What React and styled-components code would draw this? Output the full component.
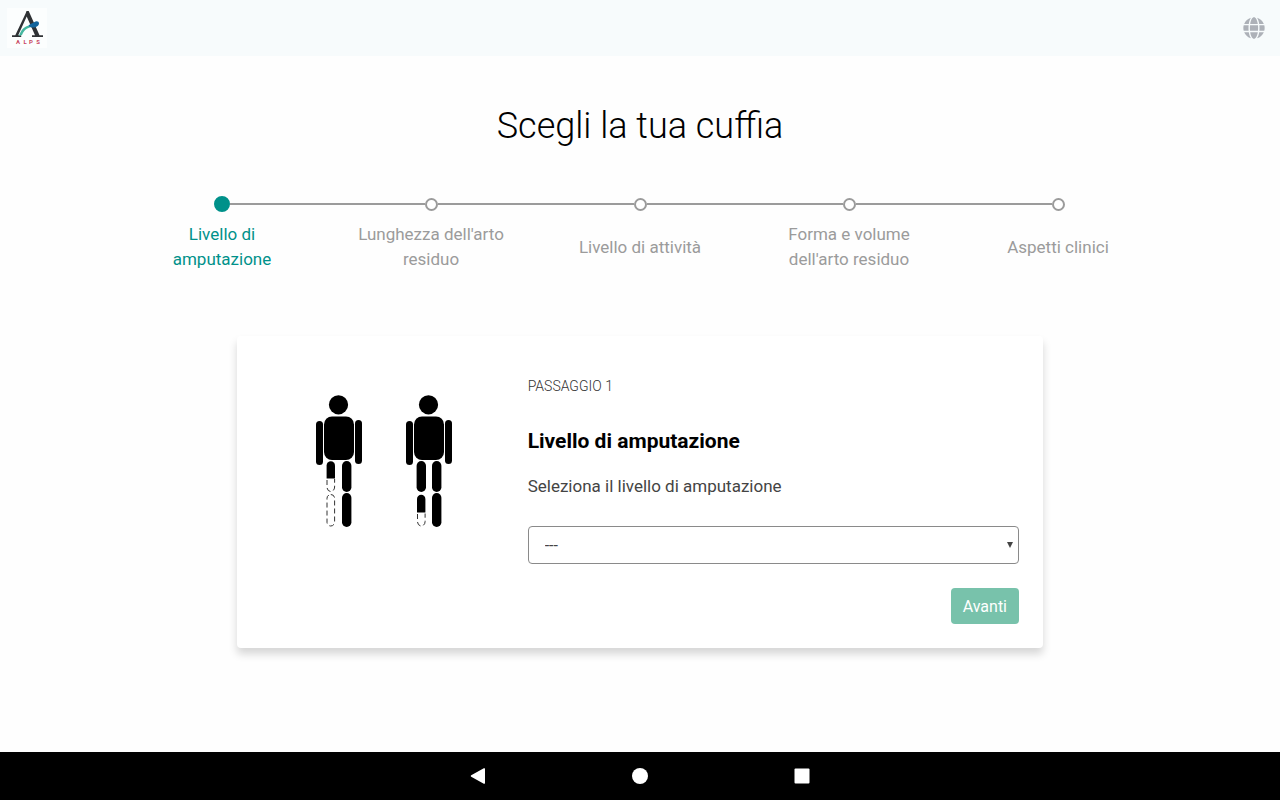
import React, { useState } from 'react';
import styled, { createGlobalStyle } from 'styled-components';
import { FaGlobe } from 'react-icons/fa';

const GlobalStyle = createGlobalStyle`
  * {
    box-sizing: border-box;
  }

  body {
    margin: 0;
    background: #fefefe;
    color: #000;
    font-family: Roboto, "Liberation Sans", sans-serif;
  }
`;

const Page = styled.div`
  display: flex;
  flex-direction: column;
  min-height: 100vh;
`;

const Header = styled.header`
  display: flex;
  align-items: center;
  justify-content: space-between;
  height: 56px;
  padding: 0 15px 0 7px;
  background: #f7fbfc;
`;

const LogoLink = styled.a`
  display: flex;
  background: #fcfefe;
`;

const LanguageButton = styled.button`
  display: flex;
  padding: 0;
  border: 0;
  background: none;
  color: #adb1b8;
  font-size: 22px;
  cursor: pointer;
`;

const Main = styled.main`
  flex: 1;
  display: flex;
  flex-direction: column;
  align-items: center;
  padding: 48px 24px;
`;

const PageTitle = styled.h1`
  margin: 0;
  font-size: 36px;
  font-weight: 300;
  line-height: 44px;
  text-align: center;
`;

const Steps = styled.ol`
  display: flex;
  width: 100%;
  max-width: 1045px;
  margin: 48px 0 64px;
  padding: 0;
  list-style: none;
`;

const Step = styled.li`
  flex: 1;
  display: flex;
  flex-direction: column;
  color: ${({ $active }) => ($active ? '#00918a' : '#9b9b9b')};
`;

const Track = styled.div`
  display: flex;
  align-items: center;
  height: 16px;
`;

const Line = styled.span`
  flex: 1;
  height: 2px;
  background: ${({ $hidden }) => ($hidden ? 'transparent' : '#9b9b9b')};
`;

const Dot = styled.span`
  width: ${({ $active }) => ($active ? '16px' : '13px')};
  height: ${({ $active }) => ($active ? '16px' : '13px')};
  border: 2px solid currentColor;
  border-radius: 50%;
  background: ${({ $active }) => ($active ? 'currentColor' : '#fff')};
`;

const StepLabel = styled.span`
  display: flex;
  align-items: center;
  justify-content: center;
  min-height: 50px;
  margin-top: 10px;
  padding: 0 24px;
  font-size: 17px;
  line-height: 25px;
  text-align: center;
`;

const Card = styled.section`
  display: grid;
  grid-template-columns: 1fr 2fr;
  gap: 21px;
  width: 100%;
  max-width: 806px;
  padding: 24px;
  border-radius: 4px;
  background: #fff;
  box-shadow: 0 6px 8px rgba(0, 0, 0, 0.16);
`;

const Figures = styled.div`
  display: flex;
  justify-content: center;
  align-items: flex-start;
  gap: 44px;
  padding-top: 35px;
`;

const Form = styled.form`
  display: flex;
  flex-direction: column;
`;

const StepNumber = styled.p`
  margin: 16px 0 32px;
  color: #333;
  font-size: 14px;
  font-weight: 300;
  line-height: 20px;
  text-transform: uppercase;
`;

const CardTitle = styled.h2`
  margin: 0 0 20px;
  font-size: 21px;
  font-weight: 700;
  line-height: 26px;
`;

const Label = styled.label`
  margin-bottom: 27px;
  color: #444;
  font-size: 17px;
  line-height: 25px;
`;

const SelectBox = styled.div`
  display: grid;
  align-items: center;
  margin-bottom: 24px;

  > * {
    grid-area: 1 / 1;
  }
`;

const Select = styled.select`
  width: 100%;
  height: 38px;
  padding: 0 24px 0 16px;
  border: 1px solid #8a8a8a;
  border-radius: 4px;
  background: #fff;
  color: #444;
  font-family: inherit;
  font-size: 16px;
  appearance: none;
`;

const Arrow = styled.svg`
  justify-self: end;
  margin-right: 6px;
  pointer-events: none;
`;

const NextButton = styled.button`
  align-self: flex-end;
  height: 36px;
  padding: 0 12px;
  border: 0;
  border-radius: 4px;
  background: #78c2ab;
  color: #fff;
  font-family: inherit;
  font-size: 16px;
  cursor: pointer;
`;

const SystemBar = styled.nav`
  position: sticky;
  bottom: 0;
  display: flex;
  align-items: center;
  justify-content: center;
  gap: 138px;
  height: 48px;
  background: #000;
`;

const SystemButton = styled.button`
  display: flex;
  padding: 0;
  border: 0;
  background: none;
`;

const steps = [
  'Livello di amputazione',
  "Lunghezza dell'arto residuo",
  'Livello di attività',
  "Forma e volume dell'arto residuo",
  'Aspetti clinici',
];

const Logo = () => (
  <svg width="40" height="40" viewBox="0 0 40 40" role="img" aria-label="ALPS">
    <path d="M19.500 3h2.200l10.800 24.200h3.500V29H25v-1.800h3L19.700 8.600 11.200 27.200h3V29H5v-1.800h3.300L18.700 5.200z" fill="#2f3235" />
    <path d="M12 28c1.800-6.500 6-10.300 12.500-11l3 1.600c-6 .6-10 2.600-12.500 8.400z" fill="#45b7a0" />
    <path d="M21.500 17.500c2-2 4.500-2.200 6-3.500 1.800-1.400 4.500-.8 4.500 1.200 0 2.500-2.800 4.300-5.500 4.300-2 .1-4-.2-5-2z" fill="#12649c" />
    <g fill="#c8475f" fontFamily="Roboto, sans-serif" fontSize="6" fontWeight="700" textAnchor="middle">
      <text x="11" y="36">A</text>
      <text x="18" y="36">L</text>
      <text x="24" y="36">P</text>
      <text x="31" y="36">S</text>
    </g>
  </svg>
);

const Figure = ({ level }) => (
  <svg width="46" height="132" viewBox="0 0 46 132" aria-hidden="true">
    <circle cx="22.5" cy="9.8" r="9.6" />
    <rect x="8" y="21.5" width="30" height="43.5" rx="8" />
    <rect x="0" y="26" width="7" height="44" rx="3.5" />
    <rect x="39" y="25" width="7" height="44" rx="3.5" />
    <rect x="26" y="66" width="9.4" height="31" rx="4.700" />
    <rect x="26" y="98" width="9.4" height="34" rx="4.700" />
    {level === 'femoral' ? (
      <>
        <path d="M10.600 83.500V70.500a4.200 4.200 0 0 1 8.400 0v13z" />
        <g fill="none" stroke="#333" strokeWidth="1">
          <path d="M11 85v7a3.800 4.500 0 0 0 7.600 0v-8" strokeDasharray="5 3" />
          <rect x="11" y="99.500" width="7.600" height="31.500" rx="3.800" strokeDasharray="5 3" />
        </g>
      </>
    ) : (
      <>
        <rect x="10.600" y="66" width="9.400" height="31" rx="4.700" />
        <path d="M11 117.500v-13.500a4.200 4.200 0 0 1 8.400 0v13.500z" />
        <path d="M11.500 119v7.500a3.800 4.500 0 0 0 7.600 0v-8" fill="none" stroke="#333" strokeDasharray="5 3" />
      </>
    )}
  </svg>
);

const App = () => {
  const [level, setLevel] = useState('');

  return (
    <Page>
      <GlobalStyle />
      <Header>
        <LogoLink href="#">
          <Logo />
        </LogoLink>
        <LanguageButton type="button" aria-label="Lingua">
          <FaGlobe />
        </LanguageButton>
      </Header>

      <Main>
        <PageTitle>Scegli la tua cuffia</PageTitle>

        <Steps>
          {steps.map((title, index) => (
            <Step key={title} $active={index === 0}>
              <Track>
                <Line $hidden={index === 0} />
                <Dot $active={index === 0} />
                <Line $hidden={index === steps.length - 1} />
              </Track>
              <StepLabel>{title}</StepLabel>
            </Step>
          ))}
        </Steps>

        <Card>
          <Figures>
            <Figure level="femoral" />
            <Figure level="tibial" />
          </Figures>
          <Form onSubmit={(e) => e.preventDefault()}>
            <StepNumber>Passaggio 1</StepNumber>
            <CardTitle>Livello di amputazione</CardTitle>
            <Label htmlFor="level">Seleziona il livello di amputazione</Label>
            <SelectBox>
              <Select id="level" value={level} onChange={(e) => setLevel(e.target.value)}>
                <option value="">---</option>
              </Select>
              <Arrow width="6" height="6" viewBox="0 0 6 6" aria-hidden="true">
                <path d="M0 0h6L3 6z" fill="#444" />
              </Arrow>
            </SelectBox>
            <NextButton type="submit">Avanti</NextButton>
          </Form>
        </Card>
      </Main>

      <SystemBar>
        <SystemButton type="button" aria-label="Indietro">
          <svg width="24" height="24" viewBox="0 0 24 24">
            <path d="M19 5v14a.8.8 0 0 1-1.200.700L5.200 12.700a.8.8 0 0 1 0-1.400L17.800 4.300a.8.8 0 0 1 1.200.7z" fill="#fff" />
          </svg>
        </SystemButton>
        <SystemButton type="button" aria-label="Home">
          <svg width="24" height="24" viewBox="0 0 24 24">
            <circle cx="12" cy="12" r="8" fill="#fff" />
          </svg>
        </SystemButton>
        <SystemButton type="button" aria-label="Recenti">
          <svg width="24" height="24" viewBox="0 0 24 24">
            <rect x="4.500" y="4.500" width="15" height="15" rx="1" fill="#fff" />
          </svg>
        </SystemButton>
      </SystemBar>
    </Page>
  );
};

export default App;
